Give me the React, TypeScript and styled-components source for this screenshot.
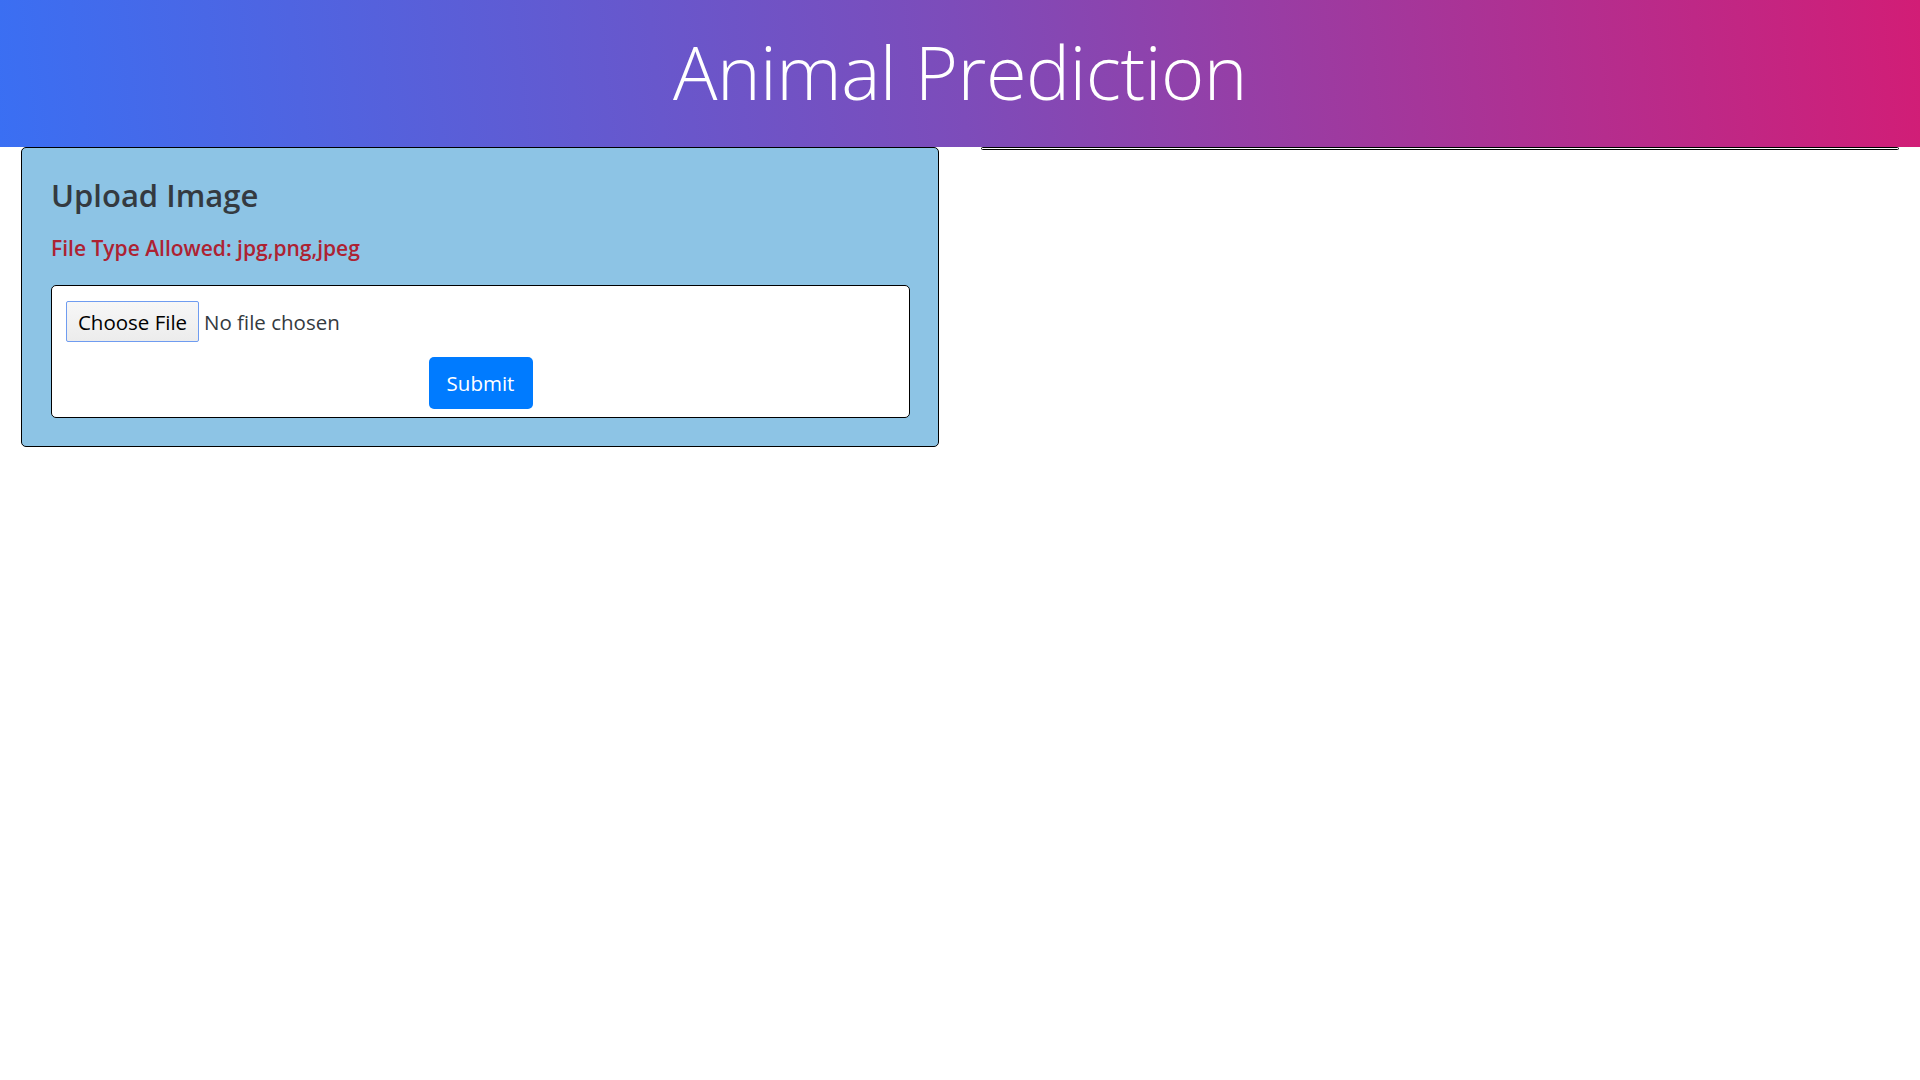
import React from 'react';
import styled, { createGlobalStyle } from 'styled-components';

const GlobalStyle = createGlobalStyle`
  html, body {
    margin: 0;
    padding: 0;
    background: #fff;
  }
  body {
    font-family: "Open Sans", "Liberation Sans", sans-serif;
    color: #212529;
  }
  * {
    box-sizing: border-box;
  }
`;

const Header = styled.header`
  height: 147px;
  display: flex;
  align-items: center;
  justify-content: center;
  background: linear-gradient(84deg, #3a6ff3 0%, #7d4cba 50%, #d21d76 100%);
`;

const Title = styled.h1`
  margin: 0 0 4px;
  font-family: "Open Sans", "Liberation Sans", sans-serif;
  font-weight: 300;
  font-size: 74px;
  line-height: 1;
  letter-spacing: -0.5px;
  color: #fff;
`;

const Row = styled.main`
  display: grid;
  grid-template-columns: 1fr 1fr;
`;

const Column = styled.section`
  padding: 0 21px;
`;

const Card = styled.div`
  background: #8dc4e5;
  border: 1px solid #000;
  border-radius: 5px;
  padding: 27px 28px 28px 29px;
`;

const EmptyCard = styled.div`
  height: 3px;
  border: 1px solid #000;
  border-radius: 2px;
`;

const CardTitle = styled.h4`
  margin: 0 0 16px;
  font-size: 31px;
  font-weight: 600;
  line-height: 40px;
  color: #343a40;
`;

const Allowed = styled.p`
  margin: 0 0 20px;
  font-size: 21px;
  font-weight: 600;
  line-height: 34px;
  color: #ad2232;
`;

const UploadForm = styled.form`
  background: #fff;
  border: 1px solid #000;
  border-radius: 5px;
  padding: 15px 14px 8px;
  display: flex;
  flex-direction: column;
  align-items: center;
  gap: 15px;
`;

const FilePicker = styled.label`
  align-self: stretch;
  display: flex;
  align-items: center;
  gap: 5px;
  font-size: 20.5px;
  cursor: pointer;

  input {
    display: none;
  }
`;

const ChooseButton = styled.span`
  display: inline-flex;
  align-items: center;
  justify-content: center;
  width: 133px;
  height: 41px;
  background: linear-gradient(#f7f7f7, #ececec);
  border: 1px solid #6f9cf0;
  border-radius: 2px;
  color: #000;
`;

const FileName = styled.span`
  color: #343a40;
`;

const SubmitButton = styled.button`
  width: 104px;
  height: 52px;
  border: none;
  border-radius: 5px;
  background: #007bff;
  color: #fff;
  font-family: "Open Sans", "Liberation Sans", sans-serif;
  font-size: 20.5px;
  cursor: pointer;
`;

export default function App() {
  return (
    <>
      <GlobalStyle />
      <Header>
        <Title>Animal Prediction</Title>
      </Header>
      <Row>
        <Column>
          <Card>
            <CardTitle>Upload Image</CardTitle>
            <Allowed>File Type Allowed: jpg,png,jpeg</Allowed>
            <UploadForm onSubmit={(e) => e.preventDefault()}>
              <FilePicker>
                <input type="file" accept=".jpg,.png,.jpeg" />
                <ChooseButton>Choose File</ChooseButton>
                <FileName>No file chosen</FileName>
              </FilePicker>
              <SubmitButton type="submit">Submit</SubmitButton>
            </UploadForm>
          </Card>
        </Column>
        <Column>
          <EmptyCard />
        </Column>
      </Row>
    </>
  );
}
